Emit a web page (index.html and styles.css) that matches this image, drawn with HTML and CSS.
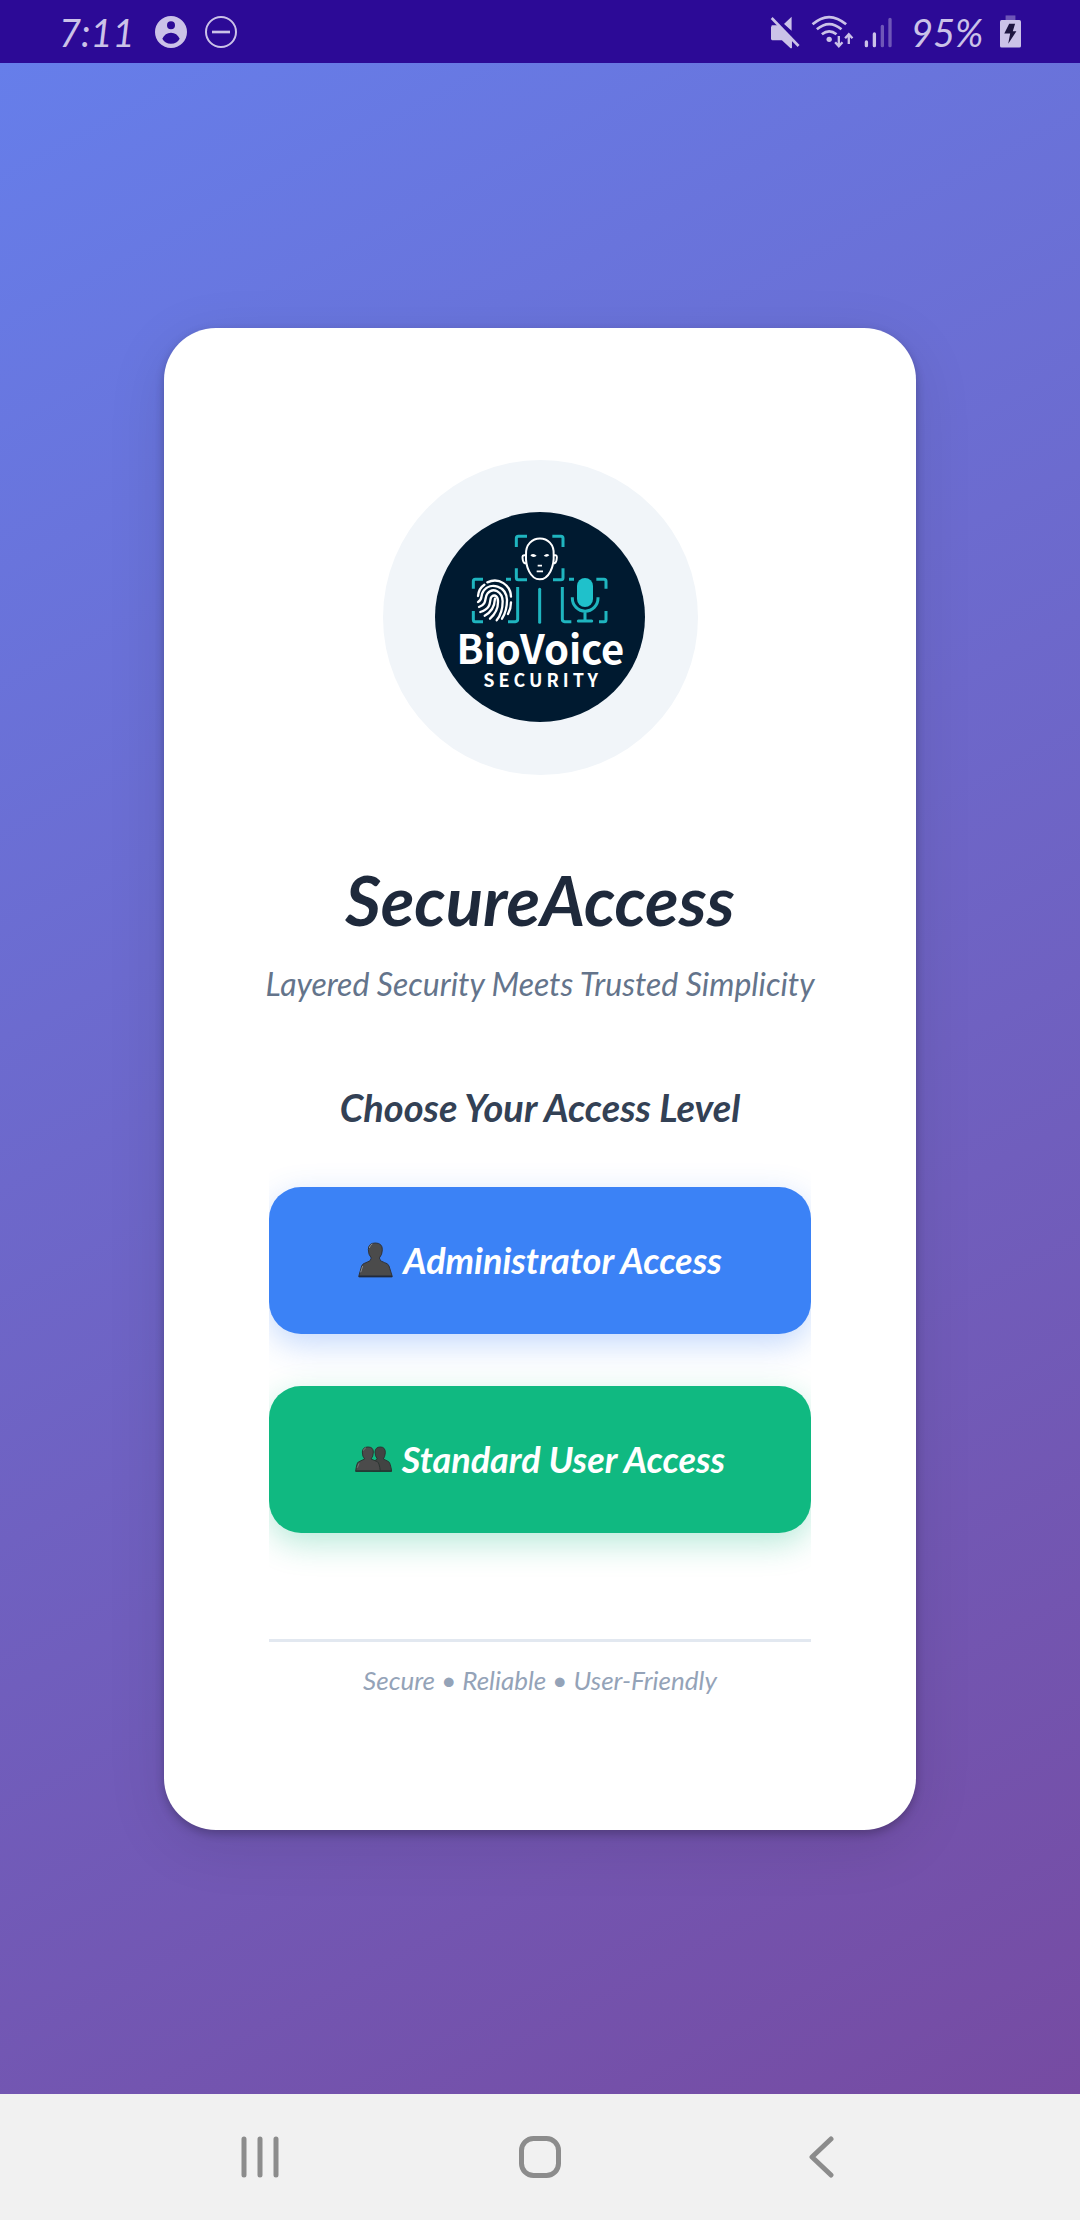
FILE: index.html
```html
<!DOCTYPE html>
<html lang="en">
<head>
<meta charset="utf-8">
<meta name="viewport" content="width=device-width, initial-scale=1">
<title>SecureAccess</title>
<link rel="stylesheet" href="styles.css">
</head>
<body>
<header class="status">
  <div class="status-group">
    <time class="clock">7:11</time>
    <svg class="status-round" viewBox="0 0 96 96" aria-label="Account"><path fill-rule="evenodd" d="M48 0a48 48 0 1 1 0 96a48 48 0 0 1 0-96zM48 16a12 12 0 1 0 0 24a12 12 0 0 0 0-24zM22 68Q30 83 48 83T74 68Q66 50 48 50T22 68z" fill="currentColor"/></svg>
    <svg class="status-round" viewBox="0 0 96 96" aria-label="Do not disturb"><circle cx="48" cy="48" r="45" fill="none" stroke="currentColor" stroke-width="6"/><path d="M21 48h54" stroke="currentColor" stroke-width="8"/></svg>
  </div>
  <div class="status-group">
    <svg class="signals" viewBox="90 38 370 102" aria-label="Muted, Wi-Fi, mobile signal">
      <path d="M93 74h24l38 37v28l-28-28H93zM132 65l23-22v42z" fill="currentColor"/>
      <path d="M97 72h18l38 37v26l-26-24H97z" fill="currentColor" stroke="currentColor" stroke-width="6" stroke-linejoin="round"/>
      <path d="M102 41l81 84" stroke="#2c0a96" stroke-width="9"/>
      <path d="M95 47l81 84" stroke="currentColor" stroke-width="8"/>
      <g fill="none" stroke="currentColor" stroke-width="8"><path d="M218 66q49-44 101 0M231 81q37-32 74 0M246 96q22-18 44 0"/></g>
      <circle cx="268" cy="111" r="8" fill="currentColor"/>
      <path d="M297 101v30M286 120l11 12 11-12M327 125V97M316 108l11-12 11 12" fill="none" stroke="currentColor" stroke-width="7"/>
      <g stroke="currentColor" stroke-width="10" stroke-linecap="round"><path d="M380 119v11M404 95v35"/><path d="M428 72v58M451 51v79" opacity=".42"/></g>
    </svg>
    <span class="charge">95%</span>
    <svg class="battery" viewBox="0 0 64 98" aria-label="Charging"><path d="M17 0h30v15H17z" fill="currentColor" opacity=".42"/><rect y="14" width="64" height="84" rx="5" fill="currentColor"/><path d="M28 25h18l-7 23h11L25 86l6-31H13z" fill="#1d1440"/></svg>
  </div>
</header>

<main class="screen">
  <section class="card">
    <div class="logo">
      <svg class="logo-mark" viewBox="198 189 630 630" role="img" aria-label="BioVoice Security">
        <circle cx="513" cy="504" r="315" fill="#001a30"/>
        <g fill="none" stroke="#1fb5bf" stroke-width="9">
          <path d="M474 262H448q-6 0-6 6V294M550 262h26q6 0 6 6V294M442 358v28q0 6 6 6h26M552 392h24q6 0 6-6V358"/>
          <path d="M342 391H319q-6 0-6 6V419M313 486v26q0 6 6 6h23M411 391h15M417 518h22q7 0 7-7V414M600 391h15M580 414v97q0 7 7 7h20M682 391h23q6 0 6 6V419M711 486v26q0 6-6 6H690"/>
          <path d="M512 421v99" stroke-linecap="round"/>
          <path d="M610 445v3a38 38 0 0 0 77 0v-3M648 486v30"/><path d="M628 516h40" stroke-linecap="round"/>
        </g>
        <rect x="624" y="387" width="48" height="87" rx="24" fill="#1fc1cb"/>
        <g fill="none" stroke="#fff" stroke-width="6">
          <path d="M471 318C467 252 559 252 554 318C556 352 540 391 512 391S469 352 471 318zM470 319q-12-3-9 11q1 14 12 14M555 319q11-3 8 11q-1 14-11 14"/>
          <path d="M503 367h19M506 350h13" stroke-width="5"/>
        </g>
        <path d="M484 319q9-9 19 1q-11 8-19-1zM524 320q10-9 17-1q-8 8-17 1z" fill="#fff"/>
        <g fill="none" stroke="#fff" stroke-width="7" stroke-linecap="round">
          <path d="M327 441q2-23 19-34M355 400c35-16 70 8 71 43M426 460q0 19-9 35"/>
          <path d="M327 459c16-8 6-20 17-34c20-27 68-15 70 28q0 33-15 56"/>
          <path d="M330 474c27-9 14-27 26-41c17-20 44-4 45 24q0 35-18 57"/>
          <path d="M334 489c40-14 24-37 34-46c11-9 20 1 19 17q0 28-24 49"/>
          <path d="M347 500q29-15 31-51"/>
        </g>
        <text class="logo-name" x="514" y="646" text-anchor="middle">BioVoice</text>
        <text class="logo-sub" x="521" y="713" text-anchor="middle">SECURITY</text>
      </svg>
    </div>
    <h1 class="title">SecureAccess</h1>
    <p class="tagline">Layered Security Meets Trusted Simplicity</p>
    <h2 class="prompt">Choose Your Access Level</h2>
    <div class="actions">
      <button class="action action-admin" type="button">
        <svg class="person" viewBox="0 0 105 108" aria-hidden="true"><path d="M2 104L11 72Q14 64 24 62Q40 58 40 48Q31 38 31 23Q31 3 52 3T73 23Q73 38 64 48Q64 58 80 62Q90 64 93 72L103 104z" fill="#4b4b4b" stroke="#303238" stroke-width="3"/><path d="M3 103h99" stroke="#202a3c" stroke-width="5"/><path d="M34 18q2-10 9-12M8 91l6-19" fill="none" stroke="#8a8d93" stroke-width="3"/></svg>
        <span>Administrator Access</span>
      </button>
      <button class="action action-user" type="button">
        <svg class="people" viewBox="0 0 111 78" aria-hidden="true"><g stroke="#2c3532" stroke-width="3"><path d="M54 76V48L67 39Q60 30 60 18Q61 3 76 3T91 20Q90 32 85 39L101 47Q106 50 110 76z" fill="#424443"/><path d="M2 76Q5 51 10 48L29 39Q22 32 22 18Q23 3 39 3T55 18Q55 32 48 39L67 47Q73 50 76 76z" fill="#4b4b4b"/></g><path d="M2 75h107" stroke="#213b34" stroke-width="4"/><path d="M25 14q2-7 8-9M7 65l5-13" fill="none" stroke="#8a8d8b" stroke-width="2"/></svg>
        <span>Standard User Access</span>
      </button>
    </div>
    <p class="motto">Secure • Reliable • User-Friendly</p>
  </section>
</main>

<nav class="navbar" aria-label="System navigation">
  <button class="nav-button" type="button" aria-label="Recent apps"><svg class="nav-icon" viewBox="0 0 42 42"><path d="M5 3v36M21 3v36M37 3v36"/></svg></button>
  <button class="nav-button" type="button" aria-label="Home"><svg class="nav-icon" viewBox="0 0 42 42"><rect x="2.5" y="2.5" width="37" height="37" rx="12"/></svg></button>
  <button class="nav-button" type="button" aria-label="Back"><svg class="nav-icon" viewBox="0 0 42 42"><path d="M32 3L13 21L32 39"/></svg></button>
</nav>
</body>
</html>
```
FILE: styles.css
```css
* { box-sizing: border-box; }

body {
  margin: 0;
  min-height: 100vh;
  display: flex;
  flex-direction: column;
  font-family: Lato, "Liberation Sans", sans-serif;
  font-style: italic;
}

h1, h2, p { margin: 0; }
svg { display: block; flex: none; }

.status {
  display: flex;
  justify-content: space-between;
  align-items: center;
  height: 63px;
  padding: 0 59px;
  background: #2c0a96;
  color: #cbc2e8;
  font-size: 38px;
  line-height: 60px;
}
.status-group { display: flex; align-items: center; }
.clock { width: 96px; }
.status-round { width: 32px; height: 32px; margin-right: 18px; }
.signals { width: 123px; height: 34px; }
.charge { width: 107px; padding-left: 18px; }
.battery { width: 21px; height: 33px; }

.screen {
  flex: 1;
  display: flex;
  align-items: center;
  justify-content: center;
  padding: 60px 164px;
  background: linear-gradient(152deg, #667eea 0%, #764ba2 100%);
}

.card {
  width: 100%;
  max-width: 752px;
  padding: 132px 105px;
  border-radius: 52px;
  background: #fff;
  box-shadow: 0 4px 10px rgba(0, 0, 0, 0.24), 0 14px 60px rgba(0, 0, 0, 0.1);
  text-align: center;
}

.logo {
  display: grid;
  place-items: center;
  width: 315px;
  height: 315px;
  margin: 0 auto;
  border-radius: 50%;
  background: #f1f5f9;
}
.logo-mark { width: 210px; height: 210px; }
.logo-mark text {
  font-family: "Noto Sans CJK SC", "Noto Sans", sans-serif;
  font-style: normal;
  font-weight: 700;
  fill: #fff;
}
.logo-name { font-size: 120px; }
.logo-sub { font-size: 54px; letter-spacing: 12px; }

.title {
  margin-top: 85px;
  font-size: 69px;
  line-height: 80px;
  font-weight: 700;
  color: #1e293b;
}
.tagline {
  margin: 24px -20px 0;
  font-size: 32px;
  line-height: 40px;
  color: #64748b;
}
.prompt {
  margin-top: 79px;
  font-size: 38px;
  line-height: 48px;
  font-weight: 700;
  color: #334155;
}

.actions {
  display: flex;
  flex-direction: column;
  gap: 52px;
  margin-top: 56px;
  clip-path: inset(-60px 0);
}
.action {
  display: flex;
  align-items: center;
  justify-content: center;
  gap: 10px;
  height: 147px;
  border: 0;
  border-radius: 32px;
  color: #fff;
  font: inherit;
  font-size: 36px;
  font-weight: 700;
  line-height: 48px;
}
.action-admin { background: #3b82f6; box-shadow: 0 10px 32px rgba(59, 130, 246, 0.3); }
.action-user { background: #10b981; box-shadow: 0 10px 32px rgba(16, 185, 129, 0.3); }
.person { width: 35px; height: 36px; }
.people { width: 37px; height: 26px; }

.motto {
  margin-top: 106px;
  padding-top: 20px;
  border-top: 3px solid #e2e8f0;
  font-size: 26px;
  line-height: 36px;
  color: #94a3b8;
}

.navbar {
  display: flex;
  justify-content: center;
  gap: 200px;
  padding: 24px 0;
  background: #f1f1f1;
}
.nav-button {
  display: grid;
  place-items: center;
  width: 80px;
  height: 78px;
  padding: 0;
  border: 0;
  background: none;
  color: #8c8c8c;
}
.nav-icon {
  width: 42px;
  height: 42px;
  fill: none;
  stroke: currentColor;
  stroke-width: 5;
  stroke-linecap: round;
  stroke-linejoin: round;
}
```
